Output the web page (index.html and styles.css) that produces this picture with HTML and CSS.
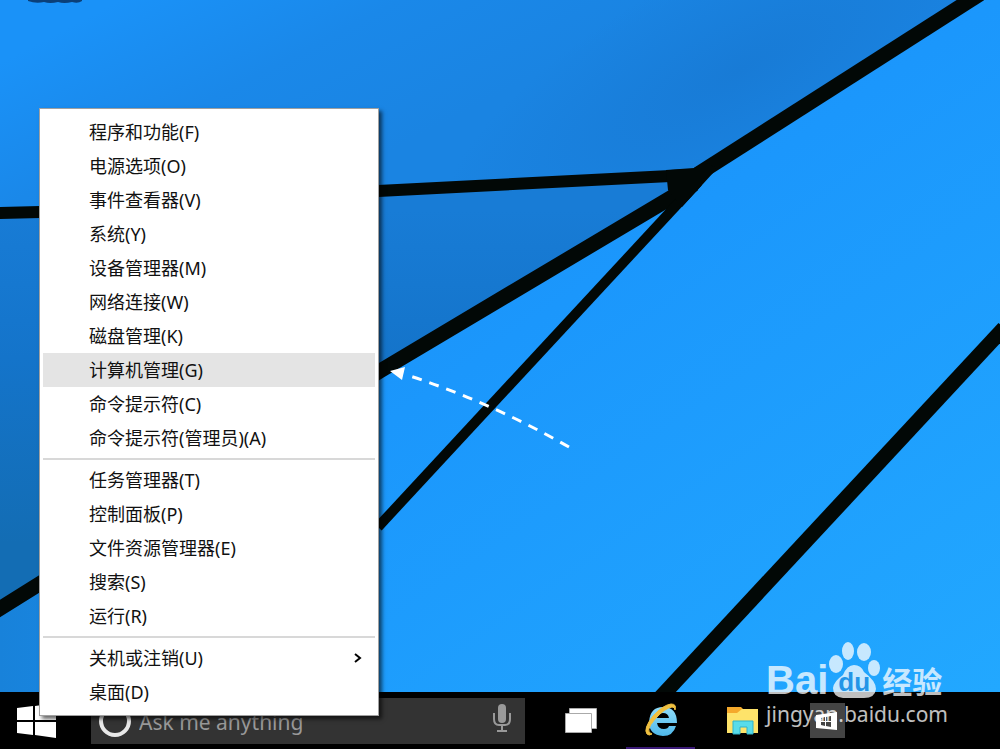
FILE: index.html
```html
<!DOCTYPE html>
<html lang="zh-CN">
<head>
    <meta charset="UTF-8">
    <meta name="viewport" content="width=device-width, initial-scale=1.0">
    <title>桌面</title>
    <link rel="stylesheet" href="styles.css">
</head>
<body>

    <main class="desktop">
        <svg class="wallpaper" viewBox="0 0 1000 692" preserveAspectRatio="none" aria-hidden="true">
            <defs>
                <linearGradient id="sky" gradientUnits="userSpaceOnUse" x1="120" y1="0" x2="240" y2="230">
                    <stop offset="0" stop-color="#1a92f8"/>
                    <stop offset="0.5" stop-color="#1a88e9"/>
                    <stop offset="1" stop-color="#1a84e2"/>
                </linearGradient>
                <radialGradient id="shade" gradientUnits="userSpaceOnUse" cx="0" cy="0" r="1" gradientTransform="translate(740 70) rotate(-28) scale(330 110)">
                    <stop offset="0" stop-color="#187bd6"/>
                    <stop offset="1" stop-color="#187bd6" stop-opacity="0"/>
                </radialGradient>
                <linearGradient id="left" gradientUnits="userSpaceOnUse" x1="0" y1="210" x2="0" y2="580">
                    <stop offset="0" stop-color="#187cd6"/>
                    <stop offset="0.4" stop-color="#1474ca"/>
                    <stop offset="0.9" stop-color="#136db4"/>
                </linearGradient>
                <linearGradient id="main" x1="0" y1="0" x2="1" y2="1">
                    <stop offset="0" stop-color="#1a88ee"/>
                    <stop offset="0.5" stop-color="#1b97fc"/>
                    <stop offset="1" stop-color="#22a8ff"/>
                </linearGradient>
                <linearGradient id="corner" gradientUnits="userSpaceOnUse" x1="0" y1="0" x2="420" y2="0">
                    <stop offset="0" stop-color="#1882da"/>
                    <stop offset="1" stop-color="#1882da" stop-opacity="0"/>
                </linearGradient>
            </defs>
            <rect width="1000" height="692" fill="url(#main)"/>
            <path d="M0 609L380 371V692H0Z" fill="url(#corner)"/>
            <path d="M0 0H978L703 172L380 191L0 213Z" fill="url(#sky)"/>
            <path d="M0 0H978L703 172L380 191L0 213Z" fill="url(#shade)"/>
            <path d="M0 213L380 191L703 176L380 371L0 609Z" fill="url(#left)"/>
            <g stroke="#020806" fill="none">
                <path d="M-2 213L40 212" stroke-width="12"/>
                <path d="M378 191L690 175" stroke-width="12"/>
                <path d="M-4 611L380 371L694 184" stroke-width="15"/>
                <path d="M378 527L698 182" stroke-width="10"/>
                <path d="M698 174L980 -6" stroke-width="15"/>
                <path d="M660 698L1004 328" stroke-width="15"/>
            </g>
            <path d="M666 170L694 168L706 162L716 168L713 173L682 207L676 200L668 190Z" fill="#020806"/>
            <path d="M28 0H82V1Q78 4 72 2Q64 4 58 2Q50 4 44 2Q36 4 28 1Z" fill="#0b3f78"/>
        </svg>

        <svg class="pointer" viewBox="0 0 190 90" aria-hidden="true">
            <path d="M179 81Q100 36 17 9" fill="none" stroke="#fff" stroke-width="3" stroke-dasharray="10 8"/>
            <path d="M0 5L15 1L12 14Z" fill="#fff"/>
        </svg>
    </main>

    <footer class="taskbar">
        <button class="start" aria-label="开始">
            <svg width="40" height="36" viewBox="0 0 40 36" fill="#fff">
                <path d="M0 5L16 3V17H0ZM18 3L39 0V17H18ZM0 19H16V32L0 30ZM18 19H39V35L18 32Z"/>
            </svg>
        </button>
        <div class="search">
            <span class="cortana"></span>
            <input type="text" placeholder="Ask me anything" aria-label="Ask me anything">
            <button class="mic" aria-label="麦克风">
                <svg width="20" height="30" viewBox="0 0 20 30" fill="none" stroke="#999" stroke-width="2">
                    <rect x="6" y="1" width="8" height="19" rx="4" fill="#999" stroke="none"/>
                    <path d="M2 10V16Q2 22 7 22H13Q18 22 18 16V10M10 22V27M5 28H15"/>
                </svg>
            </button>
        </div>
        <button class="task" aria-label="任务视图">
            <svg width="34" height="28" viewBox="0 0 34 28" fill="#fff" stroke="#aaa">
                <path d="M5.500 1.500H32.500V21.500H5.500Z"/>
                <path d="M1.500 6.500H27.500V25.500H1.500Z"/>
            </svg>
        </button>
        <button class="task active" aria-label="Internet Explorer">
            <svg width="36" height="36" viewBox="0 0 36 36">
                <defs>
                    <linearGradient id="ie" x1="0" y1="0" x2="0" y2="1">
                        <stop offset="0" stop-color="#8fdcfa"/>
                        <stop offset="1" stop-color="#4fb8ea"/>
                    </linearGradient>
                </defs>
                <path d="M34 21H14Q15 27 21 27Q25 27 26 24H33Q30 34 20 34Q6 33 6 20Q7 5 20 5Q34 5 34 21ZM14 16H26Q25 11 20 11Q15 11 14 16Z" fill="url(#ie)" fill-rule="evenodd"/>
                <path d="M32 8Q34 2 28 2Q20 3 10 14Q0 27 4 32Q6 34 9 32Q1 30 12 17Q22 6 29 5Q32 5 32 8Z" fill="#f0c040" stroke="#f0c040"/>
            </svg>
        </button>
        <button class="task" aria-label="文件资源管理器">
            <svg width="32" height="28" viewBox="0 0 32 28">
                <path d="M0 0H14L17 3V6H0Z" fill="#f5a92c"/>
                <path d="M0 6H10L15 2H31V26H0Z" fill="#fee36a"/>
                <path d="M6 14H26V27H20V20H13V27H6Z" fill="#58dcea" stroke="#31b3c9"/>
            </svg>
        </button>
        <button class="task" aria-label="应用商店">
            <span class="store">
                <svg width="22" height="20" viewBox="0 0 22 20">
                    <path d="M0 4L21 1V19L0 17Z" fill="#fff"/>
                    <path d="M5 7L9 6V10H5ZM10 6L15 5V10H10ZM5 11H9V15L5 14ZM10 11H15V16L10 15Z" fill="#444"/>
                </svg>
            </span>
        </button>
    </footer>

    <nav class="menu">
        <button>程序和功能(F)</button>
        <button>电源选项(O)</button>
        <button>事件查看器(V)</button>
        <button>系统(Y)</button>
        <button>设备管理器(M)</button>
        <button>网络连接(W)</button>
        <button>磁盘管理(K)</button>
        <button class="selected">计算机管理(G)</button>
        <button>命令提示符(C)</button>
        <button>命令提示符(管理员)(A)</button>
        <hr>
        <button>任务管理器(T)</button>
        <button>控制面板(P)</button>
        <button>文件资源管理器(E)</button>
        <button>搜索(S)</button>
        <button>运行(R)</button>
        <hr>
        <button>关机或注销(U)
            <svg width="8" height="12" viewBox="0 0 8 12" fill="none" stroke="#000" stroke-width="2">
                <path d="M1 2L6 6L1 10"/>
            </svg>
        </button>
        <button>桌面(D)</button>
    </nav>

    <div class="watermark">
        <div class="brand">
            <span class="bai">Bai</span>
            <span class="paw">
                <svg width="52" height="57" viewBox="0 0 52 57" fill="#fff" aria-hidden="true">
                    <ellipse cx="8" cy="22" rx="7" ry="9"/>
                    <ellipse cx="20" cy="9" rx="6" ry="9"/>
                    <ellipse cx="36" cy="10" rx="7" ry="9"/>
                    <ellipse cx="46" cy="26" rx="6" ry="8"/>
                    <path d="M26 23Q33 23 36 30Q48 39 48 47Q47 56 36 56H15Q5 55 5 46Q6 39 15 33Q19 23 26 23Z"/>
                </svg>
                <span class="du">du</span>
            </span>
            <span class="jingyan">经验</span>
        </div>
        <div class="site">jingyan.baidu.com</div>
    </div>

</body>
</html>
```
FILE: styles.css
```css
* {
    box-sizing: border-box;
}

body {
    margin: 0;
    height: 100vh;
    display: flex;
    flex-direction: column;
    overflow: hidden;
    position: relative;
    font-family: "Noto Sans", "Noto Sans CJK SC", sans-serif;
    background-color: #000;
}

button {
    border: none;
    background: none;
    padding: 0;
    font: inherit;
    color: inherit;
}

.desktop {
    flex: 1;
    min-height: 0;
    position: relative;
}

.wallpaper {
    display: block;
    width: 100%;
    height: 100%;
}

.pointer {
    position: absolute;
    left: 390px;
    top: 366px;
    width: 190px;
}

/* context menu of the start button */
.menu {
    position: absolute;
    left: 39px;
    bottom: 33px;
    width: 340px;
    padding: 6px 3px;
    background-color: #fff;
    border: 1px solid #a0a0a0;
    box-shadow: 3px 3px 4px rgba(0, 0, 0, 0.6);
    font-size: 18px;
    color: #111;
}

.menu button {
    display: flex;
    align-items: center;
    justify-content: space-between;
    width: 100%;
    height: 34px;
    padding: 0 13px 0 46px;
    line-height: 24px;
    text-align: left;
}

.menu button:hover,
.menu .selected {
    background-color: #e4e4e4;
}

.menu hr {
    height: 2px;
    margin: 3px 0;
    border: none;
    background-color: #d8d8d8;
}

.taskbar {
    height: 57px;
    display: flex;
    align-items: center;
}

.start {
    width: 91px;
    padding-left: 17px;
    text-align: left;
}

.start svg {
    display: block;
}

.search {
    width: 434px;
    height: 46px;
    padding: 0 13px 0 8px;
    display: flex;
    align-items: center;
    background-color: #333;
}

.cortana {
    width: 32px;
    height: 32px;
    border: 4px solid #e8e8e8;
    border-radius: 50%;
}

.search input {
    flex: 1;
    min-width: 0;
    padding: 2px 8px 0;
    border: none;
    outline: none;
    background: none;
    font-family: "Noto Sans", sans-serif;
    font-size: 21px;
    color: #fff;
}

.search input::placeholder {
    color: #999;
    opacity: 1;
}

.task {
    width: 84px;
    height: 57px;
    display: flex;
    align-items: center;
    justify-content: center;
}

.search + .task {
    width: 101px;
    padding-left: 10px;
}

.task.active {
    width: 69px;
    margin-right: 6px;
    border-bottom: 2px solid #3b1a78;
}

.store {
    width: 35px;
    height: 35px;
    display: flex;
    align-items: center;
    justify-content: center;
    background-color: #444;
}

.watermark {
    position: absolute;
    right: 52px;
    bottom: 20px;
    color: #fff;
    opacity: 0.75;
}

.brand {
    display: flex;
    align-items: flex-end;
    height: 57px;
    font-family: "Liberation Sans", "Noto Sans CJK SC", sans-serif;
    font-weight: bold;
}

.bai {
    font-size: 40px;
    line-height: 38px;
}

.paw {
    position: relative;
    height: 57px;
}

.du {
    position: absolute;
    left: 10px;
    bottom: 4px;
    font-size: 26px;
    line-height: 26px;
    color: #2490e0;
}

.jingyan {
    padding-left: 2px;
    font-size: 30px;
    line-height: 32px;
}

.site {
    font-size: 21px;
    line-height: 30px;
}
```
